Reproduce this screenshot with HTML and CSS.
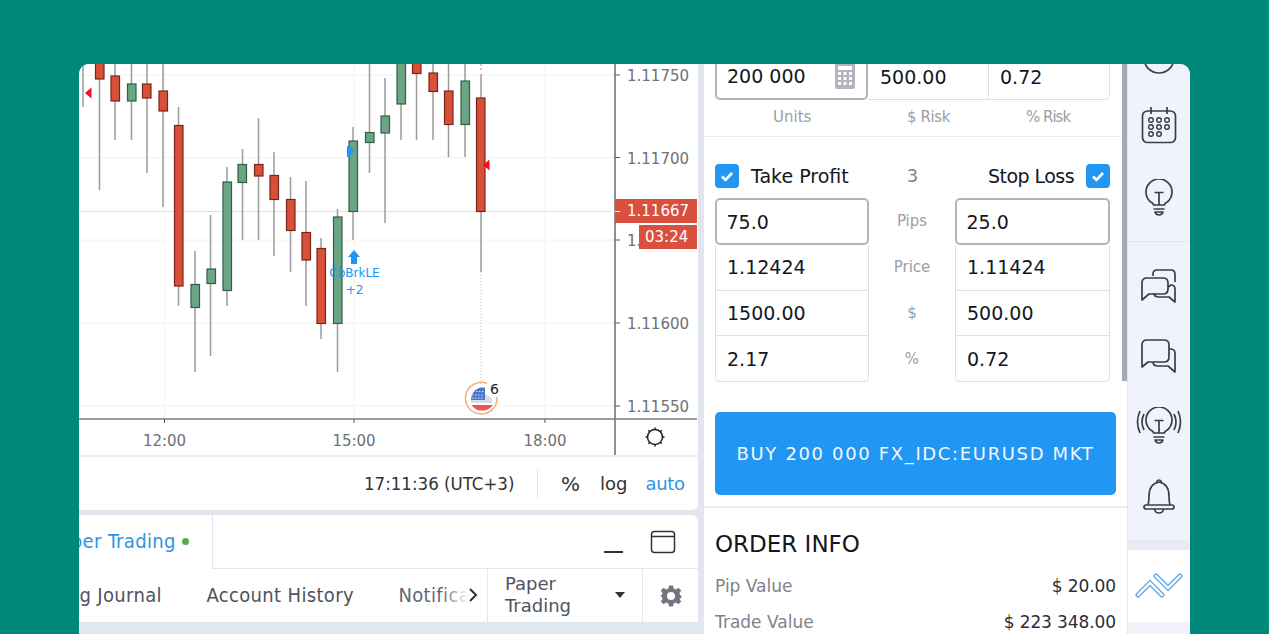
FILE: index.html
```html
<!DOCTYPE html>
<html lang="en">
<head>
<meta charset="utf-8">
<title>Paper Trading</title>
<link rel="stylesheet" href="styles.css">
</head>
<body>
<main class="app">
  <section class="left">
    <div class="chart-card">
      <svg class="chart" viewBox="79 64 619 391" width="619" height="391">
        <g class="grid">
          <path d="M79 75H615M79 157.5H615M79 240H615M79 323H615M79 406H615M164.5 64V419M354 64V419M545 64V419"/>
        </g>
        <path class="last-line" d="M79 211.5H612"/>
        <path class="dotted" d="M481 272V385"/>
        <path class="dotted-red" d="M481 64V72"/>
        <g class="wicks">
          <path d="M83 64V107M99.5 64V190M115 64V140M131.5 64V140M147 64V173M163 64V207M178.5 107V306M195 251V372M210.5 215V356M227 167V306M242.5 149V240M258.5 118V240M274 152V256M290.5 177V272M306 181V306M321 238V339M337.5 209V372M353 127V240M369.5 64V173M385 78V223M401 64V140M416.5 64V140M433 64V140M448.5 64V157M465 64V157M481 74V272"/>
        </g>
        <g class="down">
          <rect x="95.5" y="60" width="8.5" height="19"/>
          <rect x="111" y="76" width="8.5" height="25"/>
          <rect x="142.5" y="84" width="8.5" height="14"/>
          <rect x="159" y="91" width="8.5" height="20"/>
          <rect x="174.5" y="125.5" width="8.5" height="160.5"/>
          <rect x="254.5" y="164.5" width="8.5" height="11.5"/>
          <rect x="270" y="175.5" width="8.5" height="24"/>
          <rect x="286.5" y="199.5" width="8.5" height="31"/>
          <rect x="302" y="232.5" width="8.5" height="27.5"/>
          <rect x="317" y="248.5" width="8.5" height="75"/>
          <rect x="412.5" y="60" width="8.5" height="13.5"/>
          <rect x="429" y="73" width="8.5" height="18.5"/>
          <rect x="444.5" y="91" width="8.5" height="33.5"/>
          <rect x="476.5" y="98" width="8.5" height="113.5"/>
        </g>
        <g class="up">
          <rect x="127.5" y="84" width="8.5" height="17"/>
          <rect x="191" y="284.5" width="8.5" height="23"/>
          <rect x="207" y="269" width="8.5" height="14.5"/>
          <rect x="223" y="182" width="8.5" height="108.5"/>
          <rect x="238" y="164.5" width="8.5" height="18"/>
          <rect x="333.5" y="217" width="8.5" height="106.5"/>
          <rect x="349" y="141" width="8.5" height="70.5"/>
          <rect x="365.5" y="132.5" width="8.5" height="10"/>
          <rect x="381" y="116" width="8.5" height="17"/>
          <rect x="397" y="60" width="8.5" height="44"/>
          <rect x="461" y="81" width="8.5" height="43.5"/>
        </g>
        <path class="flag-red" d="M85 93L91.500 87.500V98.500ZM483 165L489.500 159.500V170.500Z"/>
        <path class="mark-blue" d="M347 146H350L354 151L350 157H347ZM354 250L360 257H357V264H351V257H348Z"/>
        <text class="strategy" x="354.500" y="277">CbBrkLE</text>
        <text class="strategy" x="354.500" y="294">+2</text>
        <g class="news">
          <circle class="news-bg" cx="481.700" cy="399" r="15"/>
          <path class="news-ring" d="M487 383.500A15.800 15.800 0 1 0 497 397"/>
          <path class="news-stripe" d="M471 400H492V403H471Z"/>
          <path class="news-blue" d="M471 400Q471 391 480 387.500H485V400Z"/>
          <path class="news-dots" d="M473 391.500H484M472 395H484M472 398H484"/>
          <path class="news-stripe" d="M485 394L492 398V400H485Z"/>
          <path class="news-red" d="M471.500 405H493Q489 410.500 482 410.500Q475 410.500 471.500 405Z"/>
          <text class="news-count" x="490" y="394">6</text>
        </g>
        <path class="axis-y" d="M615 64V456"/>
        <path class="axis-x" d="M79 419H697"/>
        <path class="ticks" d="M615 75H620M615 157.500H620M615 240H620M615 323H620M615 406H620M164.500 419V423M354 419V423M545 419V423"/>
        <text class="price" x="627" y="81">1.11750</text>
        <text class="price" x="627" y="164">1.11700</text>
        <text class="price" x="627" y="246">1.11650</text>
        <text class="price" x="627" y="329">1.11600</text>
        <text class="price" x="627" y="412">1.11550</text>
        <text class="time" x="164.500" y="446">12:00</text>
        <text class="time" x="354" y="446">15:00</text>
        <text class="time" x="545" y="446">18:00</text>
        <rect class="label-red" x="615" y="199" width="82" height="24"/>
        <path class="label-tick" d="M615 211.500H620"/>
        <rect class="label-red" x="639" y="225" width="58" height="24"/>
        <text class="price-live" x="627" y="216">1.11667</text>
        <text class="price-live" x="645" y="242">03:24</text>
        <g class="sun">
          <circle cx="655" cy="437" r="7.500"/>
          <path d="M655 427.500V429.500M655 444.500V446.500M645.500 437H647.500M662.500 437H664.500M648.300 430.300L649.700 431.700M660.300 442.300L661.700 443.700M648.300 443.700L649.700 442.300M660.300 431.700L661.700 430.300"/>
        </g>
      </svg>
      <div class="chart-bar">
        <span class="clock">17:11:36 (UTC+3)</span>
        <span class="bar-sep"></span>
        <span class="bar-opt pct">%</span>
        <span class="bar-opt log">log</span>
        <span class="bar-opt auto">auto</span>
      </div>
    </div>
    <div class="bottom-card">
      <div class="tab-row">
        <div class="tab"><span class="tab-name">Paper Trading</span><i class="dot"></i></div>
        <div class="tab-rest">
          <span class="min-line"></span>
          <svg class="max-icon" viewBox="0 0 26 24" width="26" height="24"><rect x="1.500" y="1.500" width="23" height="21" rx="3"/><path d="M1.500 6.500H24.500"/></svg>
        </div>
      </div>
      <div class="sub-row">
        <div class="sub-tabs">
          <span class="sub-tab journal">Trading Journal</span>
          <span class="sub-tab">Account History</span>
          <span class="sub-tab fade">Notifications</span>
          <svg class="chev" viewBox="0 0 10 16" width="10" height="16"><path d="M2 2L8 8L2 14"/></svg>
        </div>
        <div class="broker"><span>Paper<br>Trading</span><i class="caret"></i></div>
        <div class="gear-cell">
          <svg viewBox="0 0 24 24" width="24" height="24"><path class="gear" fill-rule="evenodd" d="M10 1.500H14L14.600 4.600L16.800 5.500L19.400 3.700L22.200 6.600L20.400 9.200L21.300 11.300L22.500 12V13L21.300 14.700L20.400 14.900L22.200 17.400L19.400 20.300L16.800 18.500L14.600 19.400L14 22.500H10L9.400 19.400L7.200 18.500L4.600 20.300L1.800 17.400L3.600 14.900L2.700 12.700L1.500 12V11L2.700 11.300L3.600 9.200L1.800 6.600L4.600 3.700L7.200 5.500L9.400 4.600ZM12 8A4 4 0 1 0 12 16A4 4 0 1 0 12 8Z"/></svg>
        </div>
      </div>
      <div class="bottom-fill"></div>
    </div>
  </section>

  <section class="order">
    <div class="scroll-thumb"></div>
    <div class="size-block">
      <div class="size-inputs">
        <div class="size-cell units"><span>200 000</span>
          <svg viewBox="0 0 20 26" width="20" height="26"><path class="calc" fill-rule="evenodd" d="M2 0H18Q20 0 20 2V24Q20 26 18 26H2Q0 26 0 24V2Q0 0 2 0ZM3 3V7H17V3ZM3 9V12H6V9ZM8.500 9V12H11.500V9ZM14 9V12H17V9ZM3 14V17H6V14ZM8.500 14V17H11.500V14ZM14 14V17H17V14ZM3 19V22H6V19ZM8.500 19V22H11.500V19ZM14 19V22H17V19Z"/></svg>
        </div>
        <div class="size-cell risk">500.00</div>
        <div class="size-cell pct-risk">0.72</div>
      </div>
      <div class="size-labels">
        <span class="lbl-units">Units</span><span class="lbl-risk">$ Risk</span><span class="lbl-pct">% Risk</span>
      </div>
    </div>

    <div class="bracket">
      <div class="bracket-head">
        <label class="check-label"><i class="check"><svg viewBox="0 0 24 24" width="24" height="24"><path d="M7 12.500L10.500 16L17 9"/></svg></i>Take Profit</label>
        <span class="ratio">3</span>
        <label class="check-label"><span class="sl">Stop Loss</span><i class="check"><svg viewBox="0 0 24 24" width="24" height="24"><path d="M7 12.500L10.500 16L17 9"/></svg></i></label>
      </div>
      <div class="bracket-grid">
        <div class="stack">
          <div class="field focus">75.0</div>
          <div class="field">1.12424</div>
          <div class="field">1500.00</div>
          <div class="field tall">2.17</div>
        </div>
        <div class="mid">
          <span>Pips</span><span>Price</span><span>$</span><span>%</span>
        </div>
        <div class="stack">
          <div class="field focus">25.0</div>
          <div class="field">1.11424</div>
          <div class="field">500.00</div>
          <div class="field tall">0.72</div>
        </div>
      </div>
    </div>

    <button class="buy">BUY 200 000 FX_IDC:EURUSD MKT</button>

    <div class="info">
      <h2>ORDER INFO</h2>
      <div class="info-row first"><span>Pip Value</span><b>$ 20.00</b></div>
      <div class="info-row"><span>Trade Value</span><b>$ 223 348.00</b></div>
    </div>
  </section>

  <aside class="side">
    <div class="side-group first">
      <div class="side-top"><svg viewBox="0 0 44 10" width="44" height="10"><path class="ic" d="M7 -6A15 15 0 0 0 37 -6"/></svg></div>
      <div class="side-item">
        <svg viewBox="0 0 36 38" width="36" height="38"><rect class="ic" x="1.500" y="5" width="33" height="31.500" rx="5"/><path class="ic" d="M10 1V8M26 1V8"/><g class="ic-dots"><circle cx="10" cy="14" r="2.300"/><circle cx="18" cy="14" r="2.300"/><circle cx="26" cy="14" r="2.300"/><circle cx="10" cy="21" r="2.300"/><circle cx="18" cy="21" r="2.300"/><circle cx="26" cy="21" r="2.300"/><circle cx="10" cy="28" r="2.300"/><circle cx="18" cy="28" r="2.300"/></g></svg>
      </div>
      <div class="side-item">
        <svg viewBox="0 0 30 38" width="30" height="38"><path class="ic" d="M9.500 26V25.500Q9 24 6.700 23A13 13 0 1 1 23.300 23Q21 24 20.500 25.500V26ZM9 26H21M9.500 30H20.500M11 33H19Q18 36 15 36Q12 36 11 33ZM15 26V13.500M10.500 13.500H19.500"/></svg>
      </div>
    </div>
    <div class="side-group second">
      <div class="side-item">
        <svg viewBox="0 0 36 36" width="36" height="36"><path class="ic" d="M12 8V6Q12 2 16 2H30Q34 2 34 6V14M28 19Q29 17 30 17Q34 17 34 21V34L28 29H18Q13 29 13 25M1 15Q1 10 6 10H22Q27 10 27 15V21Q27 26 22 26H8L1 32Z"/></svg>
      </div>
      <div class="side-item">
        <svg viewBox="0 0 36 36" width="36" height="36"><path class="ic" d="M1 7Q1 2 6 2H23Q28 2 28 7V19Q28 24 23 24H7L1 29ZM28 11H29Q34 11 34 15V34L27 28H17Q12 28 12 24"/></svg>
      </div>
      <div class="side-item">
        <svg viewBox="0 0 46 38" width="46" height="38"><path class="ic" d="M17.500 26V25.500Q17 24 14.700 23A13 13 0 1 1 31.300 23Q29 24 28.500 25.500V26ZM17 26H29M17.500 30H28.500M19 33H27Q26 36 23 36Q20 36 19 33ZM23 26V13.500M18.500 13.500H27.500M8 7Q4 15 8 23M4 4Q-1 15 4 26M38 7Q42 15 38 23M42 4Q47 15 42 26"/></svg>
      </div>
      <div class="side-item">
        <svg viewBox="0 0 32 36" width="32" height="36"><path class="ic" d="M5 27Q6 24 6 18Q6 6 16 4Q26 6 26 18Q26 24 27 27M13.500 4Q14 2 16 2Q18 2 18.500 4M3 27H29Q31 27 31 29Q31 31 29 31H3Q1 31 1 29Q1 27 3 27ZM11.500 31Q12 35 16 35Q20 35 20.500 31"/></svg>
      </div>
    </div>
    <div class="side-band"></div>
    <div class="side-active">
      <svg viewBox="0 0 48 26" width="48" height="26"><path class="zig-out" d="M3 22L15 10L27 22"/><path class="zig-in" d="M3 22L15 10L27 22"/><path class="zig-out" d="M21 3L33 15L45 3"/><path class="zig-in" d="M21 3L33 15L45 3"/></svg>
    </div>
  </aside>
</main>
</body>
</html>
```

FILE: styles.css
```css
* { box-sizing: border-box; }
html, body { margin: 0; height: 634px; overflow: hidden; }
body {
  background: #00897b;
  padding: 64px 79px 0;
  font-family: "DejaVu Sans", "Liberation Sans", sans-serif;
  color: #131722;
}
.app {
  width: 1111px;
  height: 570px;
  display: flex;
  background: #e3e6ee;
  border-radius: 10px 10px 0 0;
  overflow: hidden;
}

/* left column */
.left { width: 619px; display: flex; flex-direction: column; gap: 5px; }
.chart-card { background: #fff; height: 446px; border-radius: 0 0 6px 0; overflow: hidden; }
.chart { display: block; font-family: "DejaVu Sans", sans-serif; }
.grid path { stroke: #f1f2f4; stroke-width: 1; fill: none; }
.last-line { stroke: #f6d9d0; stroke-width: 1; fill: none; }
.dotted { stroke: #bbb; stroke-width: 1; stroke-dasharray: 1 2; fill: none; }
.dotted-red { stroke: #e66; stroke-width: 1; stroke-dasharray: 2 2; fill: none; }
.wicks path { stroke: #9b9b9d; stroke-width: 1.5; fill: none; }
.down rect { fill: #d9503a; stroke: #7a2418; stroke-width: 1.2; }
.up rect { fill: #6ba583; stroke: #2f5f45; stroke-width: 1.2; }
.flag-red { fill: #f50f1c; }
.mark-blue { fill: #2196f3; }
.strategy { fill: #2196f3; font-size: 12px; text-anchor: middle; }
.news-bg { fill: #fff; }
.news-ring { fill: none; stroke: #f2b279; stroke-width: 1.5; }
.news-blue { fill: #4a78c8; }
.news-dots { fill: none; stroke: #dfe7f7; stroke-width: 1.2; stroke-dasharray: 1.5 1.5; }
.news-stripe { fill: #d9dce4; }
.news-red { fill: #ef5350; }
.news-count { font-size: 14px; fill: #222; }
.axis-y { stroke: #555; stroke-width: 1.3; fill: none; }
.axis-x { stroke: #7b7b7b; stroke-width: 1.6; fill: none; }
.ticks { stroke: #555; stroke-width: 1; fill: none; }
.price { font-size: 15px; fill: #6e7078; }
.time { font-size: 15px; fill: #6e7078; text-anchor: middle; }
.label-red { fill: #d9503f; }
.label-tick { stroke: #fff; fill: none; }
.price-live { font-size: 15px; fill: #fff; }
.sun circle, .sun path { fill: none; stroke: #222; stroke-width: 1.5; }

.chart-bar {
  height: 55px;
  border-top: 2px solid #eceef2;
  display: flex;
  align-items: center;
  padding-left: 285px;
  font-size: 18px;
}
.clock { font-family: "DejaVu Sans Condensed", "DejaVu Sans", sans-serif; font-size: 18.5px; color: #333; width: 150px; white-space: nowrap; }
.bar-sep { width: 1px; height: 29px; background: #e3e5ea; margin-left: 23px; }
.bar-opt { white-space: nowrap; color: #333; }
.pct { margin-left: 23px; font-size: 20px; }
.log { margin-left: 20px; }
.auto { margin-left: 18px; color: #2f94e8; letter-spacing: -0.3px; }

.bottom-card {
  flex: 1;
  background: #fff;
  border-radius: 0 6px 0 0;
  display: flex;
  flex-direction: column;
  overflow: hidden;
}
.tab-row { height: 54px; display: flex; flex: none; }
.tab {
  width: 134px;
  border-right: 1.5px solid #e3e6ee;
  display: flex;
  align-items: center;
  overflow: hidden;
  white-space: nowrap;
  font-family: "DejaVu Sans Condensed", "DejaVu Sans", sans-serif;
  font-size: 20px;
  letter-spacing: 0.35px;
  color: #2f94e8;
  padding-bottom: 2px;
}
.tab-name { margin-left: -30px; }
.dot { flex: none; width: 7px; height: 7px; border-radius: 50%; background: #4caf50; margin-left: 6px; }
.tab-rest {
  flex: 1;
  border-bottom: 1.5px solid #e3e6ee;
  display: flex;
  justify-content: flex-end;
  align-items: flex-start;
  padding-right: 22px;
}
.min-line { width: 19px; height: 1.5px; background: #333; margin: 36px 27px 0 0; }
.max-icon { margin-top: 15px; }
.max-icon rect, .max-icon path { fill: none; stroke: #333; stroke-width: 1.5; }

.sub-row { height: 53px; flex: none; display: flex; }
.sub-tabs {
  width: 408px;
  overflow: hidden;
  display: flex;
  align-items: center;
  gap: 44.5px;
  position: relative;
  white-space: nowrap;
  font-family: "DejaVu Sans Condensed", "DejaVu Sans", sans-serif;
  font-size: 20px;
  letter-spacing: 0.35px;
  color: #50535e;
  padding-bottom: 2px;
}
.journal { margin-left: -56px; }
.sub-tab { flex: none; }
.fade { color: #62656f; }
.sub-tabs::after {
  content: "";
  position: absolute;
  right: 0;
  top: 0;
  bottom: 0;
  width: 46px;
  background: linear-gradient(90deg, rgba(255,255,255,0), #fff 60%);
}
.chev { position: absolute; right: 9px; top: 18px; z-index: 1; }
.chev path { fill: none; stroke: #333; stroke-width: 2; }
.broker {
  width: 155px;
  border-left: 1.5px solid #e3e6ee;
  padding: 0 17px 2px;
  display: flex;
  align-items: center;
  justify-content: space-between;
  font-size: 18px;
  line-height: 22px;
  color: #50535e;
}
.caret { border: 5.5px solid transparent; border-top: 6px solid #333; border-bottom: 0; }
.gear-cell {
  flex: 1;
  border-left: 1.5px solid #e3e6ee;
  display: flex;
  align-items: center;
  justify-content: center;
}
.gear { fill: #72757f; }
.bottom-fill { flex: 1; background: #dde8ef; }

/* order panel */
.order {
  width: 423px;
  margin-left: 6px;
  background: #fff;
  position: relative;
  overflow: hidden;
  flex: none;
}
.scroll-thumb {
  position: absolute;
  right: 0;
  top: 0;
  width: 5px;
  height: 317px;
  background: #a6a9b6;
}
.size-block { height: 73px; margin-right: 6px; border-bottom: 1.5px solid #e9ebf0; padding: 0 0 0 11px; }
.size-inputs { width: 395px; height: 36px; display: flex; font-size: 19px; }
.size-cell { height: 36px; display: flex; align-items: center; border: 1.5px solid #dcdfe6; border-top: 0; border-left: 0; padding: 0 0 10px 12px; }
.units { width: 153px; border: 2.5px solid #b2b5be; border-top: 0; border-radius: 0 0 5px 5px; justify-content: space-between; padding: 0 11px 10px 10px; }
.risk { width: 121px; }
.pct-risk { flex: 1; border-radius: 0 0 5px 0; padding-left: 11px; }
.size-labels { width: 395px; font-size: 15px; color: #9a9ea8; display: flex; padding-top: 8px; line-height: 18px; }
.lbl-units { margin-left: 58px; width: 134px; }
.lbl-risk { width: 119px; letter-spacing: -0.4px; }
.lbl-pct { letter-spacing: -1px; }
.calc { fill: #b2b5be; }

.bracket { padding: 27px 0 0 11px; width: 406px; }
.bracket-head { display: flex; align-items: center; justify-content: space-between; height: 24px; font-size: 19px; }
.check-label { display: flex; align-items: center; gap: 12px; white-space: nowrap; }
.check { width: 24px; height: 24px; border-radius: 4px; background: #2196f3; display: block; flex: none; }
.check svg { display: block; }
.check path { fill: none; stroke: #fff; stroke-width: 2.6; }
.sl { letter-spacing: -0.55px; }
.ratio { font-size: 18px; color: #7e828c; margin: -2px 0 0 -12px; }
.bracket-grid { display: grid; grid-template-columns: 154px 86px 155px; margin-top: 10px; }
.stack { display: flex; flex-direction: column; }
.field {
  height: 45.500px;
  display: flex;
  align-items: center;
  padding-left: 11px;
  font-size: 19px;
  border: 1.5px solid #dcdfe6;
  border-top: 0;
}
.field.tall { height: 46px; border-radius: 0 0 5px 5px; }
.field.focus { height: 47px; border: 2.500px solid #b2b5be; border-radius: 5px; padding-left: 9.500px; }
.mid { display: flex; flex-direction: column; align-items: center; font-size: 15px; color: #9a9ea8; }
.mid span { height: 46px; display: flex; align-items: center; }

.buy {
  display: block;
  width: 401px;
  height: 83px;
  margin: 29.500px 0 0 11px;
  border: 0;
  border-radius: 5px;
  background: #2196f3;
  color: #f2f9ff;
  font: 18px "DejaVu Sans", sans-serif;
  letter-spacing: 1.65px;
  white-space: nowrap;
  padding: 0;
}
.info { margin-top: 11px; border-top: 2px solid #eceef2; padding: 21px 11px 0; }
.info h2 { margin: 0; font-size: 23px; line-height: 30px; font-weight: 400; }
.info-row { display: flex; justify-content: space-between; font-size: 17px; line-height: 24px; margin-top: 12px; white-space: nowrap; }
.info-row.first { margin-top: 15px; }
.info-row span { color: #7e828c; }
.info-row b { font-weight: 400; color: #2a2e39; letter-spacing: -0.1px; }

/* sidebar */
.side { flex: 1; background: #f1f3fa; display: flex; flex-direction: column; border-left: 1.5px solid #e3e6ee; }
.side-group.first { height: 178px; border-bottom: 1.5px solid #e3e6ee; }
.side-top { height: 24px; display: flex; justify-content: center; }
.side-top svg { display: block; }
.side-item { height: 73px; display: flex; align-items: center; justify-content: center; }
.side-group.second { padding-top: 9px; height: 298px; }
.side-group.second .side-item { height: 70px; }
.ic { fill: none; stroke: #3a3d47; stroke-width: 1.7; stroke-linejoin: round; }
.ic-dots circle { fill: none; stroke: #3a3d47; stroke-width: 1.4; }
.side-band { height: 10px; background: #e9ebf2; }
.side-active { height: 72px; background: #fff; display: flex; align-items: center; justify-content: center; }
.zig-out { fill: none; stroke: #5ea9e8; stroke-width: 5; stroke-linecap: round; stroke-linejoin: miter; }
.zig-in { fill: none; stroke: #fff; stroke-width: 2.4; stroke-linecap: round; stroke-linejoin: miter; }
```
